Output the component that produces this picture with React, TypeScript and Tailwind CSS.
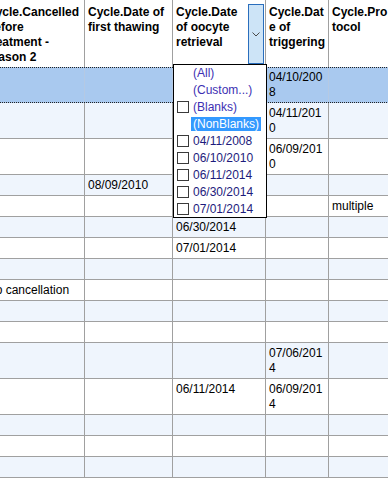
import React from "react";

type Row = { two: boolean; sel?: boolean; c: string[] };

const rows: Row[] = [
  { two: true, sel: true, c: ["", "", "", "04/10/2008", ""] },
  { two: true, c: ["", "", "", "04/11/2010", ""] },
  { two: true, c: ["", "", "", "06/09/2010", ""] },
  { two: false, c: ["", "08/09/2010", "", "", ""] },
  { two: false, c: ["", "", "", "", "multiple"] },
  { two: false, c: ["", "", "06/30/2014", "", ""] },
  { two: false, c: ["", "", "07/01/2014", "", ""] },
  { two: false, c: ["", "", "", "", ""] },
  { two: false, c: ["No cancellation", "", "", "", ""] },
  { two: false, c: ["", "", "", "", ""] },
  { two: false, c: ["", "", "", "", ""] },
  { two: true, c: ["", "", "", "07/06/2014", ""] },
  { two: true, c: ["", "", "06/11/2014", "06/09/2014", ""] },
  { two: false, c: ["", "", "", "", ""] },
  { two: false, c: ["", "", "", "", ""] },
  { two: false, c: ["", "", "", "", ""] },
];

const COLS = "grid grid-cols-[101px_88px_93px_63px_64px]";

function Checkbox() {
  return <span className="ml-[3px] mr-[4px] w-[12px] h-[12px] border border-[#3a3a3a] bg-white shrink-0" />;
}

function FilterItem({ label, check, hl, special }: { label: string; check?: boolean; hl?: boolean; special?: boolean }) {
  return (
    <div className="h-[17px] flex items-center">
      {check ? <Checkbox /> : <span className="w-[19px] shrink-0" />}
      {hl ? (
        <span className="ml-[-2px] px-[2px] h-[14px] leading-[14px] bg-[#3399ff] text-white">{label}</span>
      ) : (
        <span className={special ? "leading-[14px] text-[#3d2fb3]" : "leading-[14px] text-[#1d1b7c]"}>{label}</span>
      )}
    </div>
  );
}

export default function App() {
  return (
    <div className="relative w-[388px] h-[478px] overflow-hidden bg-white text-[12px] text-black font-['Liberation_Sans',Arial,sans-serif]">
      <div className="ml-[-16px] w-[409px]">
        {/* header */}
        <div className={COLS + " h-[67px] bg-white font-bold"}>
          <div className="border-r border-[#a0a0a0] pl-[3px] pr-[3px] pt-[5px] leading-[15px] [overflow-wrap:anywhere]">
            Cycle.Cancelled before treatment - reason 2
          </div>
          <div className="border-r border-[#a0a0a0] pl-[3px] pr-[2px] pt-[5px] leading-[15px] [overflow-wrap:anywhere]">
            Cycle.Date of first thawing
          </div>
          <div className="border-r border-[#a0a0a0] pl-[3px] pr-[1px] flex">
            <div className="flex-1 min-w-0 pt-[5px] leading-[15px] [overflow-wrap:anywhere]">
              Cycle.Date of oocyte retrieval
            </div>
            <div className="mt-[4px] w-[16px] h-[60px] shrink-0 border border-[#2a6ebd] bg-[#cde4f7] flex items-center justify-center">
              <svg width="8" height="5" viewBox="0 0 8 5">
                <path d="M0.5 0.5 L4 4 L7.5 0.5" fill="none" stroke="#4a4a4a" strokeWidth="1" />
              </svg>
            </div>
          </div>
          <div className="border-r border-[#a0a0a0] pl-[3px] pr-[2px] pt-[5px] leading-[15px] [overflow-wrap:anywhere]">
            Cycle.Date of triggering
          </div>
          <div className="border-r border-[#a0a0a0] pl-[3px] pr-[2px] pt-[5px] leading-[15px] [overflow-wrap:anywhere]">
            Cycle.Protocol
          </div>
        </div>
        {/* rows */}
        {rows.map((r, i) =>
          r.sel ? (
            <div key={i} className={COLS + " h-[36px] bg-[#a9c9ef] border-y border-dotted border-[#222]"}>
              {r.c.map((t, j) => (
                <div
                  key={j}
                  className={
                    j === 0
                      ? "border-r border-[#b5c9e3] pl-[3px] pr-[3px] pt-[2px] leading-[15px] [overflow-wrap:anywhere]"
                      : "border-r border-[#b5c9e3] pl-[3px] pr-[2px] pt-[2px] leading-[15px] [overflow-wrap:anywhere]"
                  }
                >
                  {t}
                </div>
              ))}
            </div>
          ) : (
            <div
              key={i}
              className={
                (i % 2 === 1 ? "bg-[#eff5fd] " : "bg-white ") + COLS + (r.two ? " h-[36px]" : " h-[21px]")
              }
            >
              {r.c.map((t, j) => (
                <div
                  key={j}
                  className={
                    j === 0
                      ? "border-r border-b border-[#a0a0a0] pl-[3px] pr-[3px] pt-[3px] leading-[15px] [overflow-wrap:anywhere]"
                      : "border-r border-b border-[#a0a0a0] pl-[3px] pr-[2px] pt-[3px] leading-[15px] [overflow-wrap:anywhere]"
                  }
                >
                  {t}
                </div>
              ))}
            </div>
          )
        )}
      </div>

      {/* filter dropdown */}
      <div className="absolute left-[173px] top-[64px] w-[94px] h-[154px] overflow-hidden border border-black bg-white flex flex-col">
        <FilterItem label="(All)" special />
        <FilterItem label="(Custom...)" special />
        <FilterItem label="(Blanks)" check special />
        <FilterItem label="(NonBlanks)" hl />
        <FilterItem label="04/11/2008" check />
        <FilterItem label="06/10/2010" check />
        <FilterItem label="06/11/2014" check />
        <FilterItem label="06/30/2014" check />
        <FilterItem label="07/01/2014" check />
      </div>
    </div>
  );
}
